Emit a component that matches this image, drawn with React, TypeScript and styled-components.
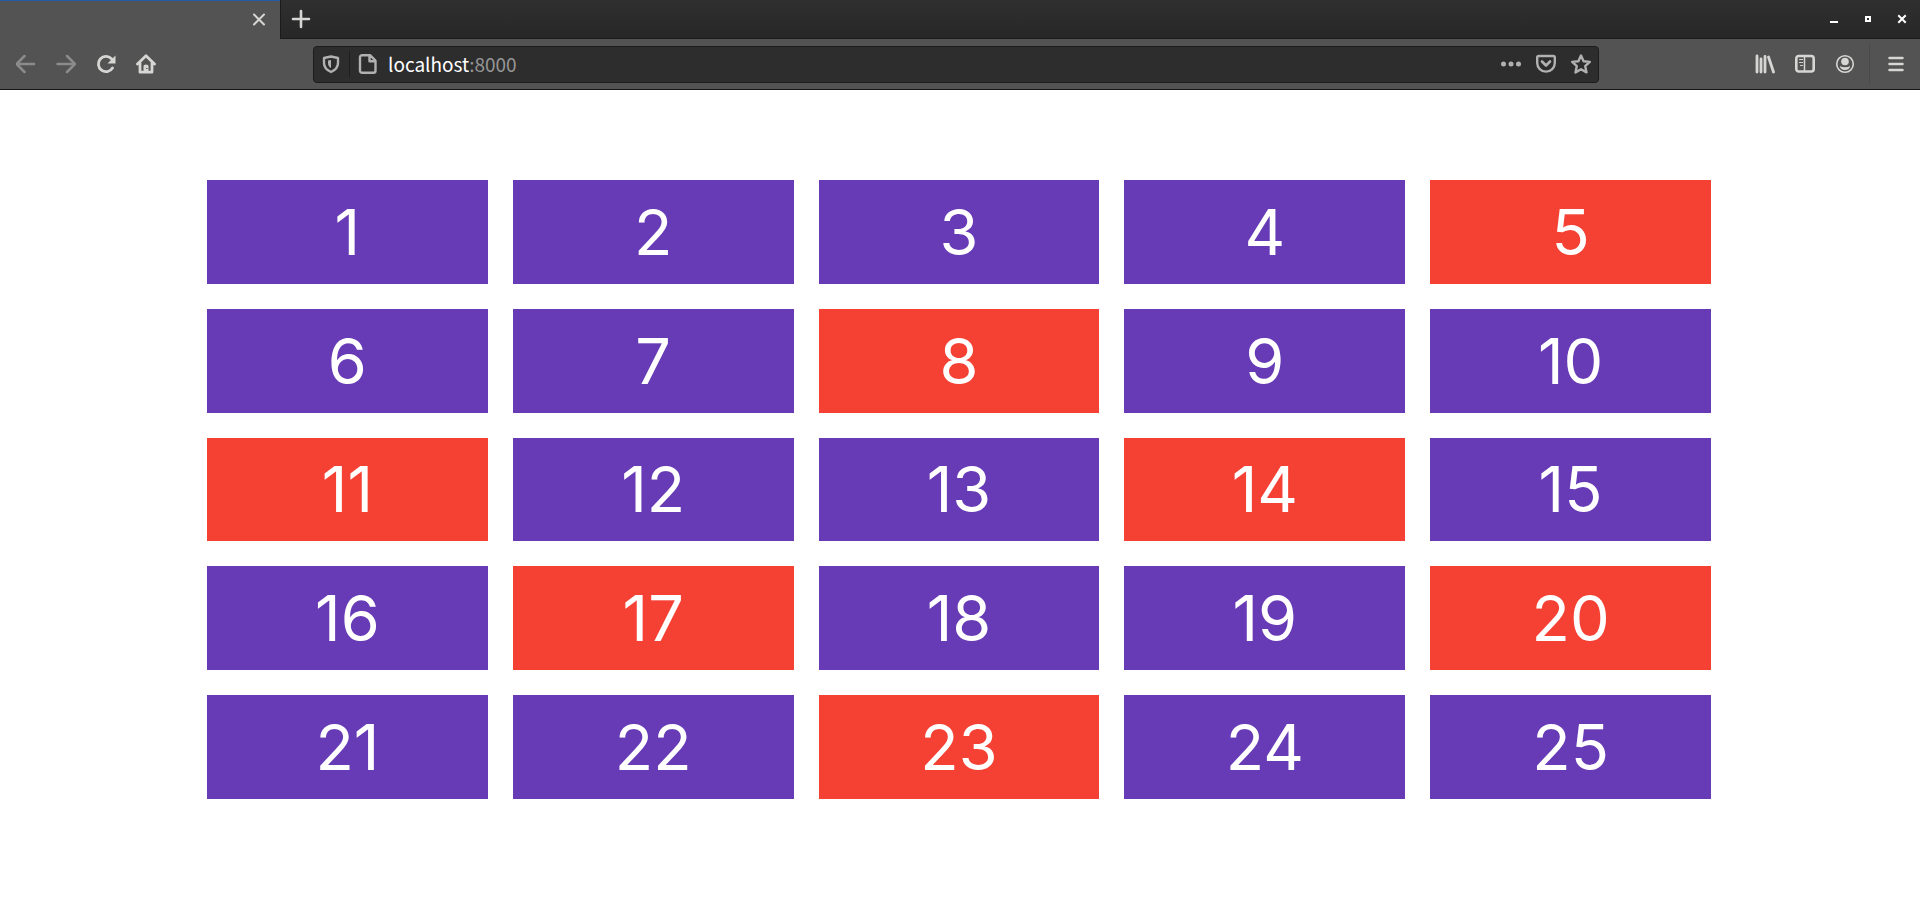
import React from "react";
import styled, { createGlobalStyle } from "styled-components";

const GlobalStyle = createGlobalStyle`
  * { box-sizing: border-box; }
  body { margin: 0; background: #fff; font-family: Inter, sans-serif; }
`;

const TabStrip = styled.header`
  display: flex;
  height: 39px;
  background: linear-gradient(#2f2f2f, #272727);
`;

const Tab = styled.div`
  display: flex;
  align-items: center;
  justify-content: flex-end;
  width: 280px;
  padding-right: 11px;
  border-top: 1px solid #1f5ba8;
  background: #535353;
`;

const StripRest = styled.div`
  display: flex;
  flex: 1;
  align-items: center;
  justify-content: space-between;
  padding: 0 8px;
  border-left: 1px solid #1b1b1b;
  border-bottom: 1px solid #1b1b1b;
`;

const IconButton = styled.button<{ $size?: number; $color?: string }>`
  display: grid;
  place-items: center;
  flex: none;
  width: ${(p) => p.$size ?? 20}px;
  height: ${(p) => p.$size ?? 20}px;
  padding: 0;
  border: 0;
  background: none;
  color: ${(p) => p.$color ?? "#d6d6d4"};
  svg { display: block; }
`;

const WindowControls = styled.div`
  display: flex;
  gap: 14px;
`;

const Toolbar = styled.nav`
  display: flex;
  align-items: center;
  height: 51px;
  background: #535353;
  border-bottom: 1px solid #1a161a;
`;

const NavGroup = styled.div`
  display: flex;
  flex: none;
  gap: 20px;
  width: 313px;
  padding-left: 16px;
`;

const ToolGroup = styled.div`
  display: flex;
  flex: none;
  align-items: center;
  justify-content: flex-end;
  gap: 20px;
  width: 321px;
  padding-right: 14px;
`;

const Divider = styled.span<{ $height: number; $color: string }>`
  width: 1px;
  height: ${(p) => p.$height}px;
  background: ${(p) => p.$color};
`;

const MenuGroup = styled.div`
  display: flex;
  align-items: center;
  gap: 16px;
  margin-left: -6px;
`;

const AddressBar = styled.form`
  display: flex;
  flex: 1;
  align-items: center;
  gap: 8px;
  height: 37px;
  padding: 0 7px;
  border: 1px solid #1c1c1c;
  border-radius: 4px;
  background: #2d2d2d;
`;

const Address = styled.label`
  display: flex;
  flex: 1;
  align-items: center;
  margin-left: 2px;
  font: 19px/28px "Noto Sans CJK SC", sans-serif;
  color: #969696;
`;

const HostInput = styled.input`
  field-sizing: content;
  height: 28px;
  padding: 0;
  border: 0;
  outline: 0;
  background: none;
  font: inherit;
  color: #fff;
`;

const AddressActions = styled.div`
  display: flex;
  gap: 15px;
`;

const Grid = styled.main`
  display: grid;
  grid-template-columns: repeat(5, 1fr);
  grid-template-rows: repeat(5, 1fr);
  gap: 25px;
  min-height: 799px;
  padding: 90px 209px 90px 207px;
`;

const Cell = styled.div<{ $accent: boolean }>`
  display: grid;
  place-items: center;
  padding: 16px;
  background: ${(p) => (p.$accent ? "#f54034" : "#673ab6")};
  color: #fff;
  font-size: 63px;
  line-height: 64px;
`;

const accents = new Set([5, 8, 11, 14, 17, 20, 23]);
const numbers = Array.from({ length: 25 }, (_, i) => i + 1);

type IconProps = { size?: number; width?: number; children: React.ReactNode };

const Icon = ({ size = 20, width = 2, children }: IconProps) => (
  <svg
    width={size}
    height={size}
    viewBox={`0 0 ${size} ${size}`}
    fill="none"
    stroke="currentColor"
    strokeWidth={width}
    strokeLinecap="round"
    strokeLinejoin="round"
    aria-hidden="true"
  >
    {children}
  </svg>
);

export default function App() {
  return (
    <>
      <GlobalStyle />
      <TabStrip>
        <Tab>
          <IconButton aria-label="Close tab">
            <Icon><path d="M5 4.500l10 10M15 4.500l-10 10" /></Icon>
          </IconButton>
        </Tab>
        <StripRest>
          <IconButton $size={24} aria-label="New tab">
            <Icon width={2.6}><path d="M10 2v16M2 10h16" /></Icon>
          </IconButton>
          <WindowControls>
            <IconButton aria-label="Minimize" $color="#fff">
              <Icon><path d="M6 12h8v2H6z" fill="currentColor" stroke="none" /></Icon>
            </IconButton>
            <IconButton aria-label="Restore" $color="#fff">
              <Icon><path d="M7 7h6v6H7zM9 9v2h2V9z" fill="currentColor" fillRule="evenodd" stroke="none" /></Icon>
            </IconButton>
            <IconButton aria-label="Close window" $color="#fff">
              <Icon><path d="M7 7l6 6M13 7l-6 6" strokeLinecap="square" /></Icon>
            </IconButton>
          </WindowControls>
        </StripRest>
      </TabStrip>

      <Toolbar aria-label="Navigation">
        <NavGroup>
          <IconButton aria-label="Back" $color="#8b8b8b">
            <Icon width={2.5}><path d="M8.500 2L.5 10l8 8M.5 10h17.500" /></Icon>
          </IconButton>
          <IconButton aria-label="Forward" $color="#8b8b8b">
            <Icon width={2.5}><path d="M11 2l8 8-8 8M19 10H1.500" /></Icon>
          </IconButton>
          <IconButton aria-label="Reload">
            <Icon>
              <path d="M16.500 14A7.600 7.600 0 1 1 15.500 4.800" strokeWidth={2.8} />
              <path d="M19.500 1.500v8H11.500z" fill="currentColor" stroke="none" />
            </Icon>
          </IconButton>
          <IconButton aria-label="Home">
            <Icon width={2.8}>
              <path d="M1.500 10L10 1.800l8.500 8.200M4 9v9.200h12V9" />
              <path d="M7.500 18v-6q0-1.500 2.500-1.500t2.500 1.500v6z" fill="currentColor" stroke="none" />
              <path d="M10.500 14.500h.5" stroke="#535353" strokeWidth={1} />
            </Icon>
          </IconButton>
        </NavGroup>

        <AddressBar onSubmit={(e) => e.preventDefault()}>
          <IconButton type="button" aria-label="Tracking protection" $color="#b1b1b1">
            <Icon width={2.4}>
              <path d="M10 2.500L17 4v5c0 4-2.500 7-7 9-4.500-2-7-5-7-9V4z" />
              <path d="M10 6v8c-2-1-3-2.500-3-5V6.500z" fill="currentColor" stroke="none" />
            </Icon>
          </IconButton>
          <Divider $height={26} $color="#1d1d1d" />
          <IconButton type="button" aria-label="Site information" $color="#b1b1b1">
            <Icon width={2.4}>
              <path d="M4 1.200h8l5.500 5.500v10a2 2 0 0 1-2 2H4a2 2 0 0 1-2-2V3.200a2 2 0 0 1 2-2zM11.500 1.800v5.400h5.500" />
            </Icon>
          </IconButton>
          <Address>
            <HostInput defaultValue="localhost" aria-label="Address" spellCheck={false} />
            <span>:8000</span>
          </Address>
          <AddressActions>
            <IconButton type="button" aria-label="Page actions" $color="#b1b1b1">
              <Icon>
                <g fill="currentColor" stroke="none">
                  <circle cx="2.500" cy="10" r="2.500" />
                  <circle cx="10" cy="10" r="2.500" />
                  <circle cx="17.500" cy="10" r="2.500" />
                </g>
              </Icon>
            </IconButton>
            <IconButton type="button" aria-label="Save to Pocket" $color="#b1b1b1">
              <Icon width={2.4}>
                <path d="M2.500 2h15a1.300 1.300 0 0 1 1.300 1.300V9a8.800 8.600 0 0 1-17.600 0V3.300A1.300 1.300 0 0 1 2.500 2z" />
                <path d="M6 7.500l4 4 4-4" strokeWidth={2.6} />
              </Icon>
            </IconButton>
            <IconButton type="button" aria-label="Bookmark this page" $color="#b1b1b1">
              <Icon width={2.4}>
                <path d="M10 1.500l2.600 5.700 6.200.7-4.600 4.200 1.300 6.300L10 15.300l-5.500 3.100 1.300-6.300-4.600-4.200 6.200-.7z" />
              </Icon>
            </IconButton>
          </AddressActions>
        </AddressBar>

        <ToolGroup>
          <IconButton aria-label="Library">
            <Icon width={2.8}><path d="M2 2v16M6 5v13M10 2.500v15.500M13.500 3l5 15" /></Icon>
          </IconButton>
          <IconButton aria-label="Sidebars">
            <Icon width={2.600}>
              <rect x="1.300" y="2" width="17.400" height="15.500" rx="2.500" />
              <path d="M9.500 3v14" strokeWidth={1.5} />
              <path d="M4.500 5.500h3M4.500 8.500h3M5.500 11.500h2" strokeWidth={1.2} />
            </Icon>
          </IconButton>
          <IconButton aria-label="Account">
            <Icon width={1.6}>
              <circle cx="10" cy="10" r="8.300" />
              <circle cx="10" cy="7.500" r="3.800" fill="currentColor" stroke="none" />
              <path d="M4.800 12q2 1.300 5.200 1.300t5.200-1.300q-.8 4-5.200 4t-5.200-4z" fill="currentColor" stroke="none" />
            </Icon>
          </IconButton>
          <MenuGroup>
            <Divider $height={42} $color="#494949" />
            <IconButton aria-label="Open menu">
              <Icon width={2.500}><path d="M3.500 4h13M3.500 10h13M3.500 16h13" /></Icon>
            </IconButton>
          </MenuGroup>
        </ToolGroup>
      </Toolbar>

      <Grid>
        {numbers.map((n) => (
          <Cell key={n} $accent={accents.has(n)}>{n}</Cell>
        ))}
      </Grid>
    </>
  );
}
